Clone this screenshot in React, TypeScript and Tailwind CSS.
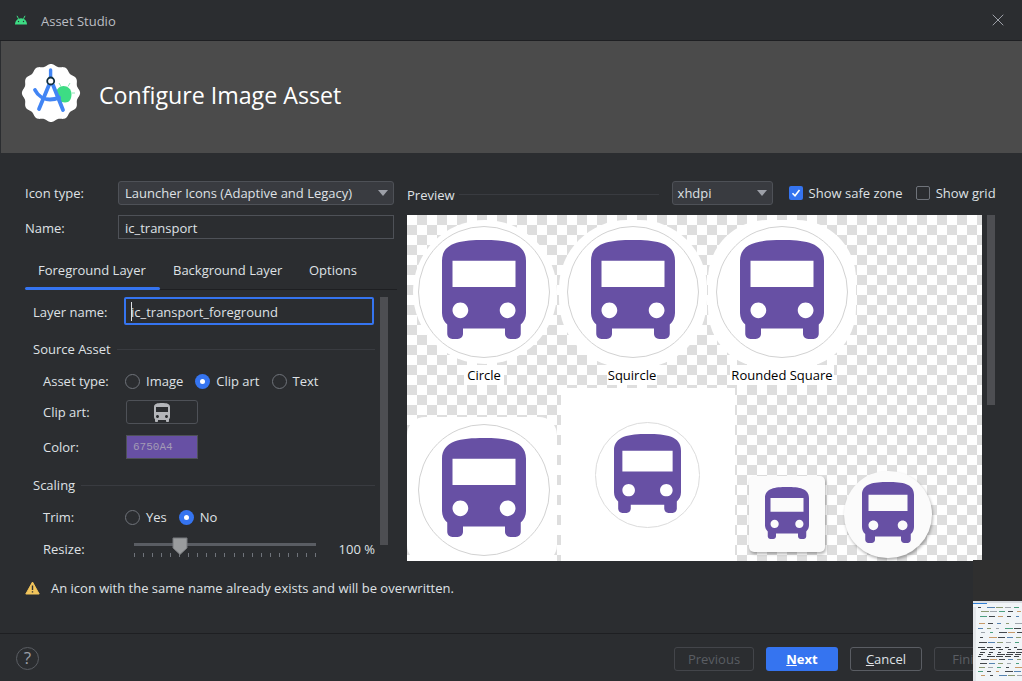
import React from "react"
import { X } from "lucide-react"

const busPath =
  "M4 16c0 .88.39 1.67 1 2.22V20c0 .55.45 1 1 1h1c.55 0 1-.45 1-1v-1h8v1c0 .55.45 1 1 1h1c.55 0 1-.45 1-1v-1.78c.61-.55 1-1.34 1-2.22V6c0-3.5-3.58-4-8-4s-8 .5-8 4v10zm3.5 1c-.83 0-1.5-.67-1.5-1.5S6.67 14 7.5 14s1.5.67 1.5 1.5S8.33 17 7.5 17zm9 0c-.83 0-1.5-.67-1.5-1.5s.67-1.5 1.5-1.5 1.5.67 1.5 1.5-.67 1.5-1.5 1.5zm1.5-6H6V6h12v5z"

function Bus({ className, fill = "#6750A4" }: { className: string; fill?: string }) {
  return (
    <svg viewBox="4 2 16 19" preserveAspectRatio="none" className={className}>
      <path d={busPath} fill={fill} fillRule="evenodd" />
    </svg>
  )
}

// white scalloped badge behind the studio logo
function scallop() {
  const pts: string[] = []
  for (let i = 0; i <= 240; i++) {
    const a = (i / 240) * Math.PI * 2
    const r = 28 + 1.1 * Math.cos(a * 12)
    pts.push(`${(30 + r * Math.sin(a)).toFixed(2)},${(30 - r * Math.cos(a)).toFixed(2)}`)
  }
  return `M${pts.join("L")}Z`
}

function StudioLogo() {
  return (
    <svg width="60" height="60" viewBox="0 0 60 60" className="shrink-0">
      <path d={scallop()} fill="#fff" />
      <path d="M35 31c0-5 3.500-8 7.500-8s8 3 8 8c0 5-2 8.500-6.500 8.500-5 0-9-3.500-9-8.500z" fill="#3ddc84" />
      <path d="M38 20l2 3.500M49 20l-2 3.500M51 30h3" stroke="#8fe8b6" strokeWidth="1" />
      <path d="M29.600 7v7" stroke="#4285f4" strokeWidth="3.400" strokeLinecap="round" />
      <path d="M28 22L18 46M32 22l10 25" stroke="#4285f4" strokeWidth="3.800" strokeLinecap="round" />
      <path d="M14 27c3 6 9 9.500 15 9.500 4 0 7-1 9-2" stroke="#4285f4" strokeWidth="3.800" fill="none" strokeLinecap="round" />
      <circle cx="29.700" cy="18" r="3.500" fill="#fff" stroke="#0f2e3d" strokeWidth="1.800" />
    </svg>
  )
}

function AndroidHead() {
  return (
    <svg width="14" height="10" viewBox="0 0 14 10" className="shrink-0">
      <path d="M1 9.500C1 6 3.700 3.200 7 3.200s6 2.800 6 6.300z" fill="#3ddc84" />
      <path d="M3 .8l1.500 3M11 .8L9.500 3.800" stroke="#3ddc84" strokeWidth="1" />
      <circle cx="4.500" cy="6.500" r=".7" fill="#2b2d30" />
      <circle cx="9.500" cy="6.500" r=".7" fill="#2b2d30" />
    </svg>
  )
}

function Radio({ label, checked }: { label: string; checked?: boolean }) {
  return (
    <div className="flex items-center">
      {checked ? (
        <span className="w-[15px] h-[15px] rounded-full bg-[#3574f0] flex items-center justify-center">
          <span className="w-[5px] h-[5px] rounded-full bg-white" />
        </span>
      ) : (
        <span className="w-[15px] h-[15px] rounded-full border border-[#6f737a]" />
      )}
      <span className="ml-[6px] pt-[2px]">{label}</span>
    </div>
  )
}

function Caret() {
  return <span className="w-0 h-0 border-x-[5px] border-x-transparent border-t-[6px] border-t-[#9da0a8]" />
}

function SectionTitle({ title }: { title: string }) {
  return (
    <div className="flex items-center gap-[6px] pl-[8px] pr-[5px] h-5">
      <span className="pt-[2px]">{title}</span>
      <span className="flex-1 h-px bg-[#393b40]" />
    </div>
  )
}

function FormRow({ label, children, className }: { label: string; children: React.ReactNode; className: string }) {
  return (
    <div className={`flex items-center pl-[18px] ${className}`}>
      <span className="w-[82px] shrink-0 pt-[2px]">{label}</span>
      {children}
    </div>
  )
}

function Slider() {
  const ticks = Array.from({ length: 21 }, (_, i) => i)
  return (
    <div className="relative w-[183px] h-[24px] ml-[9px]">
      <div className="absolute left-0 right-[1px] top-[6px] h-[3px] bg-[#5a5d63]" />
      <div className="absolute left-0 top-[16px] w-[183px] flex justify-between pr-px">
        {ticks.map((t) => (
          <span key={t} className="w-px h-[4px] bg-[#6f737a]" />
        ))}
      </div>
      <svg width="16" height="18" viewBox="0 0 16 18" className="absolute left-[38px] top-0">
        <path d="M1 1h14v10l-7 6.500L1 11z" fill="#9a9c9e" stroke="#77797c" strokeWidth="1" />
      </svg>
    </div>
  )
}

function PreviewLabel({ text, className }: { text: string; className: string }) {
  return <div className={`absolute h-[20px] leading-[20px] bg-white text-black text-center ${className}`}>{text}</div>
}

// bottom right thumbnail of another window, sits over the dialog
function Thumbnail() {
  const rows = [6, 10, 15, 22, 27, 31, 36, 41, 46, 48, 51, 53, 55, 58, 62, 66, 70, 74]
  const colors = ["#24292f", "#3b6ea5", "#7a8a5a", "#8f979f", "#2f8f6b", "#24292f", "#c08a50"]
  return (
    <div className="absolute right-0 bottom-0 w-[49px] h-[121px] flex flex-col">
      <div className="h-[41px] bg-[#2f2f2f]" />
      <svg width="49" height="80" viewBox="0 0 49 80" className="block">
        <rect width="49" height="80" fill="#f1f5f8" />
        <rect width="49" height="2" fill="#d9dde2" />
        <rect y="2" width="14" height="1" fill="#2f7fd6" />
        <rect width="3" y="6" height="74" fill="#e3e6ea" />
        {rows.map((y, i) =>
          [0, 1, 2, 3, 4].map((j) => (
            <rect
              key={`${i}-${j}`}
              x={5 + j * 9 + ((i * 3) % 4)}
              y={y}
              width={3 + ((i + j) * 5) % 6}
              height={1}
              fill={i > 7 && i < 13 ? "#1f2328" : colors[(i * 2 + j) % colors.length]}
              opacity={0.85}
            />
          )),
        )}
      </svg>
    </div>
  )
}

export default function App() {
  return (
    <div className="relative w-[1022px] h-[681px] overflow-hidden bg-[#2b2d30] text-[#dfe1e5] text-[13px] font-['Open_Sans',sans-serif] flex flex-col">
      {/* Title bar */}
      <div className="h-[41px] shrink-0 flex items-center pl-[14px] pr-[14px] border-b border-[#1e1f22]">
        <AndroidHead />
        <span className="ml-[13px] pt-[3px] text-[#bcbec4]">Asset Studio</span>
        <X className="ml-auto w-[20px] h-[20px] text-[#9da0a8]" strokeWidth={1.200} />
      </div>

      {/* Banner */}
      <div className="h-[112px] shrink-0 ml-px bg-[#4b4b4b] flex items-center pl-[20px] pb-[8px]">
        <StudioLogo />
        <span className="ml-[18px] pt-[4px] text-[23.2px] text-white">Configure Image Asset</span>
      </div>

      {/* Body */}
      <div className="flex-1 flex min-h-0">
        {/* Left column */}
        <div className="w-[397px] shrink-0 pl-[25px] pt-[28px] flex flex-col">
          <div className="flex items-center h-[24px] pr-[3px]">
            <span className="w-[93px] shrink-0 pt-[2px]">Icon type:</span>
            <div className="flex-1 h-[24px] rounded-[3px] bg-[#393b40] border border-[#4e5157] flex items-center justify-between pl-[6px] pr-[5px]">
              <span className="pt-[2px]">Launcher Icons (Adaptive and Legacy)</span>
              <Caret />
            </div>
          </div>
          <div className="flex items-center h-[24px] mt-[10px] pr-[3px]">
            <span className="w-[93px] shrink-0 pt-[4px]">Name:</span>
            <div className="flex-1 h-[24px] border border-[#4e5157] flex items-center pl-[6px]">
              <span className="pt-[4px]">ic_transport</span>
            </div>
          </div>

          {/* Tabs */}
          <div className="h-[39px] mt-[12px] relative flex border-b border-[#1e1f22]">
            <div className="w-[135px] pl-[13px] pt-[10px]">Foreground Layer</div>
            <div className="w-[136px] pl-[13px] pt-[10px]">Background Layer</div>
            <div className="pt-[10px] pl-[13px]">Options</div>
            <div className="absolute left-0 bottom-[-1px] w-[135px] h-[3px] rounded-full bg-[#3574f0]" />
          </div>

          <div className="flex mt-[7px]">
            <div className="w-[355px] shrink-0 flex flex-col">
              <div className="flex items-center h-[28px] pl-[8px] pr-[6px] gap-[16px]">
                <span className="w-[75px] shrink-0 pt-[4px]">Layer name:</span>
                <div className="w-[250px] h-[28px] border-2 border-[#3574f0] rounded-[2px] flex items-center pl-[5px] relative">
                  <span className="absolute left-[5px] top-[3px] w-px h-[19px] bg-[#dfe1e5]" />
                  <span className="pt-[4px]">ic_transport_foreground</span>
                </div>
              </div>
              <div className="mt-[14px]"><SectionTitle title="Source Asset" /></div>
              <FormRow label="Asset type:" className="h-[24px] mt-[10px]">
                <div className="flex gap-[12px]">
                  <Radio label="Image" />
                  <Radio label="Clip art" checked />
                  <Radio label="Text" />
                </div>
              </FormRow>
              <FormRow label="Clip art:" className="h-[24px] mt-[7px]">
                <div className="ml-px w-[72px] h-[24px] rounded-[3px] border border-[#4e5157] flex items-center justify-center">
                  <Bus className="w-[16px] h-[19px]" fill="#b4b6ba" />
                </div>
              </FormRow>
              <FormRow label="Color:" className="h-[24px] mt-[11px]">
                <div className="ml-px w-[72px] h-[24px] bg-[#6750A4] border border-[#4e5157] flex items-center pl-[6px] text-[11px] text-[#a39bb5] font-['Liberation_Mono',monospace]">
                  6750A4
                </div>
              </FormRow>
              <div className="mt-[16px]"><SectionTitle title="Scaling" /></div>
              <FormRow label="Trim:" className="h-[24px] mt-[10px]">
                <div className="flex gap-[12px]">
                  <Radio label="Yes" />
                  <Radio label="No" checked />
                </div>
              </FormRow>
              <FormRow label="Resize:" className="h-[24px] mt-[8px]">
                <Slider />
                <span className="ml-auto pr-[5px] pt-[2px]">100 %</span>
              </FormRow>
            </div>
            <div className="w-[8px] h-[248px] bg-[#4d4e52]" />
          </div>
        </div>

        {/* Right column */}
        <div className="flex-1 pl-[10px] pt-[28px] flex flex-col min-w-0">
          <div className="flex items-center h-[24px]">
            <span className="pt-[6px]">Preview</span>
            <span className="w-[200px] h-px bg-[#393b40] ml-[4px] mt-[2px]" />
            <div className="ml-[13px] w-[101px] h-[24px] rounded-[3px] bg-[#393b40] border border-[#4e5157] flex items-center justify-between pl-[5px] pr-[5px]">
              <span className="pt-[2px]">xhdpi</span>
              <Caret />
            </div>
            <span className="ml-[16px] w-[14px] h-[14px] rounded-[2px] bg-[#3574f0] flex items-center justify-center">
              <svg width="10" height="10" viewBox="0 0 10 10">
                <path d="M1.500 5.200L4 7.800 8.500 2" stroke="#fff" strokeWidth="1.600" fill="none" />
              </svg>
            </span>
            <span className="ml-[6px] pt-[2px]">Show safe zone</span>
            <span className="ml-[13px] w-[14px] h-[14px] rounded-[2px] border border-[#6f737a]" />
            <span className="ml-[6px] pt-[2px]">Show grid</span>
          </div>

          <div className="mt-[10px] flex h-[346px]">
            {/* Preview canvas: shapes sit at free positions and overlap */}
            <div className="relative w-[575px] h-full overflow-hidden bg-white bg-[repeating-conic-gradient(#dedede_0_25%,#ffffff_0_50%)] bg-[length:20px_20px]">
              <div className="absolute left-[6px] top-[5px] w-[144px] h-[144px] rounded-full bg-white" />
              <div className="absolute left-[152px] top-[5px] w-[148px] h-[148px] rounded-[46%] bg-white" />
              <div className="absolute left-[301px] top-[5px] w-[148px] h-[148px] rounded-[40%] bg-white" />
              <div className="absolute left-[11px] top-[11px] w-[132px] h-[132px] rounded-full border border-[#d2d2d2]" />
              <div className="absolute left-[160px] top-[11px] w-[132px] h-[132px] rounded-full border border-[#d2d2d2]" />
              <div className="absolute left-[309px] top-[11px] w-[132px] h-[132px] rounded-full border border-[#d2d2d2]" />
              <Bus className="absolute left-[35px] top-[25px] w-[84px] h-[99px]" />
              <Bus className="absolute left-[184px] top-[25px] w-[84px] h-[99px]" />
              <Bus className="absolute left-[333px] top-[25px] w-[84px] h-[99px]" />
              <PreviewLabel text="Circle" className="left-[57px] top-[150px] w-[40px]" />
              <PreviewLabel text="Squircle" className="left-[200px] top-[150px] w-[50px]" />
              <PreviewLabel text="Rounded Square" className="left-[323px] top-[150px] w-[104px]" />

              {/* second row */}
              <div className="absolute left-0 top-[202px] w-[150px] h-[146px] rounded-[18px] bg-white" />
              <div className="absolute left-[11px] top-[209px] w-[132px] h-[132px] rounded-full border border-[#d2d2d2]" />
              <Bus className="absolute left-[35px] top-[223px] w-[84px] h-[99px]" />
              <div className="absolute left-[154px] top-[173px] w-[174px] h-[173px] bg-white" />
              <div className="absolute left-[188px] top-[207px] w-[105px] h-[106px] rounded-full border border-[#dcdcdc]" />
              <Bus className="absolute left-[207px] top-[219px] w-[67px] h-[79px]" />
              <div className="absolute left-[342px] top-[261px] w-[76px] h-[76px] rounded-[5px] bg-[#fbfbfb] shadow-[1px_2px_3px_rgba(0,0,0,0.3)]" />
              <Bus className="absolute left-[358px] top-[272px] w-[44px] h-[52px]" />
              <div className="absolute left-[437px] top-[256px] w-[88px] h-[87px] rounded-full bg-[#fbfbfb] shadow-[1px_2px_3px_rgba(0,0,0,0.3)]" />
              <Bus className="absolute left-[455px] top-[267px] w-[52px] h-[61px]" />
            </div>
            <div className="ml-[5px] w-[8px] h-[190px] bg-[#4d4e52]" />
          </div>
        </div>
      </div>

      {/* Warning */}
      <div className="absolute left-[25px] top-[578px] flex items-center gap-[11px] h-[20px]">
        <svg width="15" height="14" viewBox="0 0 15 14">
          <path d="M7.500 1L14.200 13H.8z" fill="#f2c55c" stroke="#f2c55c" strokeLinejoin="round" />
          <path d="M7.500 4.500v4.500M7.500 10.300v1.300" stroke="#2b2d30" strokeWidth="1.400" />
        </svg>
        <span className="pt-[2px]">An icon with the same name already exists and will be overwritten.</span>
      </div>

      {/* Footer */}
      <div className="h-[48px] shrink-0 border-t border-[#1e1f22] flex items-center pl-[16px] pt-[1px]">
        <span className="w-[23px] h-[23px] rounded-full border border-[#5a5d63] flex items-center justify-center text-[17px] text-[#9da0a8]">?</span>
        <div className="ml-auto flex gap-[12px] mr-[16px] mt-[1px]">
          <span className="w-[80px] h-[24px] rounded-[3px] border border-[#43454a] flex items-center justify-center text-[#5a5d63] pt-[2px]">Previous</span>
          <span className="w-[72px] h-[24px] rounded-[3px] bg-[#3574f0] flex items-center justify-center font-bold text-white pt-[2px]">
            <span><span className="underline">N</span>ext</span>
          </span>
          <span className="w-[72px] h-[24px] rounded-[3px] border border-[#5a5d63] flex items-center justify-center pt-[2px]">
            <span><span className="underline">C</span>ancel</span>
          </span>
          <span className="w-[72px] h-[24px] rounded-[3px] border border-[#43454a] flex items-center justify-center text-[#5a5d63] pt-[2px]">Finish</span>
        </div>
      </div>

      <Thumbnail />
    </div>
  )
}
